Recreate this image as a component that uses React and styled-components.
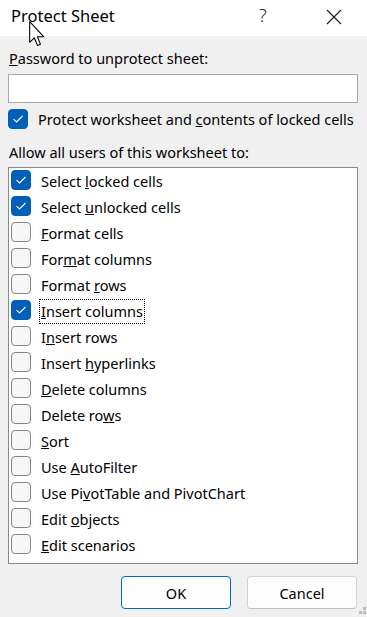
import React from 'react';
import styled, { createGlobalStyle } from 'styled-components';

const GlobalStyle = createGlobalStyle`
  html, body {
    margin: 0;
    padding: 0;
    background: #f0f0f0;
  }
  body {
    font-family: "Noto Sans", "Liberation Sans", sans-serif;
    color: #000;
  }
`;

// whole dialog window
const Dialog = styled.div`
  position: relative;
  width: 367px;
  height: 617px;
  background: #f0f0f0;
  display: flex;
  flex-direction: column;
  overflow: hidden;
`;

const TitleBar = styled.div`
  height: 36px;
  background: #fff;
  display: flex;
  align-items: center;
  padding-left: 11px;
  flex-shrink: 0;
`;

const Title = styled.div`
  font-size: 16.5px;
  line-height: 22px;
  margin-top: -4px;
  flex: 1;
`;

const HelpGlyph = styled.div`
  width: 20px;
  font-size: 18px;
  line-height: 22px;
  margin-top: -6px;
  font-weight: 300;
  color: #1a1a1a;
`;

const CloseButton = styled.div`
  width: 16px;
  height: 16px;
  margin: -2px 25px 0 47px;
  display: flex;
`;

const Body = styled.div`
  padding: 0 9px 0 8px;
  display: flex;
  flex-direction: column;
  font-size: 14.5px;
`;

const Label = styled.div`
  line-height: 20px;
  margin-top: ${(p) => p.$top || 0}px;
  padding-left: 1px;
`;

const TextInput = styled.div`
  margin-top: 6px;
  height: 29px;
  box-sizing: border-box;
  background: #fff;
  border: 1px solid #a9a9a9;
`;

const ProtectRow = styled.div`
  margin-top: 6px;
  display: flex;
  align-items: center;
  gap: 10px;
  height: 20px;
  white-space: nowrap;
`;

const List = styled.div`
  margin-top: 5px;
  height: 397px;
  box-sizing: border-box;
  background: #fff;
  border: 1px solid #868a91;
  padding: 2px 0 0 2px;
`;

const Row = styled.div`
  height: 26px;
  display: flex;
  align-items: flex-start;
  gap: 10px;
`;

const RowText = styled.span`
  line-height: 20px;
  margin-top: -1px;
  margin-left: -2px;
  padding: 1px 1px 2px;
  border: 1px dotted ${(p) => (p.$focus ? '#000' : 'transparent')};
`;

const Box = styled.div`
  width: 20px;
  height: 20px;
  box-sizing: border-box;
  border-radius: 4px;
  flex-shrink: 0;
  display: flex;
  align-items: center;
  justify-content: center;
  background: ${(p) => (p.$checked ? '#005fb8' : '#f7f7f7')};
  border: 1px solid ${(p) => (p.$checked ? '#005fb8' : '#858585')};
`;

const ButtonBar = styled.div`
  margin-top: 12px;
  display: flex;
  justify-content: flex-end;
  gap: 16px;
  padding-right: 1px;
`;

const Button = styled.div`
  width: 110px;
  height: 33px;
  box-sizing: border-box;
  border-radius: 4px;
  background: #fdfdfd;
  display: flex;
  align-items: center;
  justify-content: center;
  font-size: 14.5px;
  border: 1px solid ${(p) => (p.$primary ? '#0067c0' : '#d3d3d3')};
  border-bottom-color: ${(p) => (p.$primary ? '#0067c0' : '#bdbdbd')};
`;

const Grip = styled.svg`
  position: absolute;
  right: 0;
  bottom: 1px;
`;

const Cursor = styled.svg`
  position: absolute;
  left: 29px;
  top: 21px;
`;

const Check = () => (
  <svg width="12" height="10" viewBox="0 0 12 10">
    <path d="M1.5 5.2 L4.5 8 L10.5 2" fill="none" stroke="#fff" strokeWidth="1.1" />
  </svg>
);

const CheckBox = ({ checked }) => <Box $checked={checked}>{checked && <Check />}</Box>;

const items = [
  { pre: 'Select ', key: 'l', post: 'ocked cells', checked: true },
  { pre: 'Select ', key: 'u', post: 'nlocked cells', checked: true },
  { pre: '', key: 'F', post: 'ormat cells' },
  { pre: 'For', key: 'm', post: 'at columns' },
  { pre: 'Format ', key: 'r', post: 'ows' },
  { pre: '', key: 'I', post: 'nsert columns', checked: true, focus: true },
  { pre: 'I', key: 'n', post: 'sert rows' },
  { pre: 'Insert ', key: 'h', post: 'yperlinks' },
  { pre: '', key: 'D', post: 'elete columns' },
  { pre: 'Delete ro', key: 'w', post: 's' },
  { pre: '', key: 'S', post: 'ort' },
  { pre: 'Use ', key: 'A', post: 'utoFilter' },
  { pre: 'Use Pi', key: 'v', post: 'otTable and PivotChart' },
  { pre: 'Edit ', key: 'o', post: 'bjects' },
  { pre: '', key: 'E', post: 'dit scenarios' },
];

export default function App() {
  return (
    <Dialog>
      <GlobalStyle />
      <TitleBar>
        <Title>Protect Sheet</Title>
        <HelpGlyph>?</HelpGlyph>
        <CloseButton>
          <svg width="16" height="16" viewBox="0 0 16 16">
            <path d="M1 1 L15 15 M15 1 L1 15" stroke="#1a1a1a" strokeWidth="1.1" />
          </svg>
        </CloseButton>
      </TitleBar>

      <Body>
        <Label $top={12}>
          <u>P</u>assword to unprotect sheet:
        </Label>
        <TextInput />
        <ProtectRow>
          <CheckBox checked />
          <span>
            Protect worksheet and <u>c</u>ontents of locked cells
          </span>
        </ProtectRow>
        <Label $top={13}>Allow all users of this worksheet to:</Label>
        <List>
          {items.map((it, i) => (
            <Row key={i}>
              <CheckBox checked={it.checked} />
              <RowText $focus={it.focus}>
                {it.pre}
                <u>{it.key}</u>
                {it.post}
              </RowText>
            </Row>
          ))}
        </List>
        <ButtonBar>
          <Button $primary>OK</Button>
          <Button>Cancel</Button>
        </ButtonBar>
      </Body>

      <Grip width="9" height="9" viewBox="0 0 9 9">
        <rect x="5" y="0" width="3" height="3" fill="#bcbcbc" />
        <rect x="1" y="4" width="3" height="3" fill="#bcbcbc" />
        <rect x="5" y="4" width="3" height="3" fill="#bcbcbc" />
      </Grip>

      <Cursor width="16" height="26" viewBox="0 0 12 19.5">
        <path
          d="M0.5 0.5 L0.5 16 L4 12.6 L6.4 18.4 L8.6 17.5 L6.3 11.8 L11 11.8 Z"
          fill="#fff"
          stroke="#000"
          strokeWidth="0.8"
          strokeLinejoin="round"
        />
      </Cursor>
    </Dialog>
  );
}
